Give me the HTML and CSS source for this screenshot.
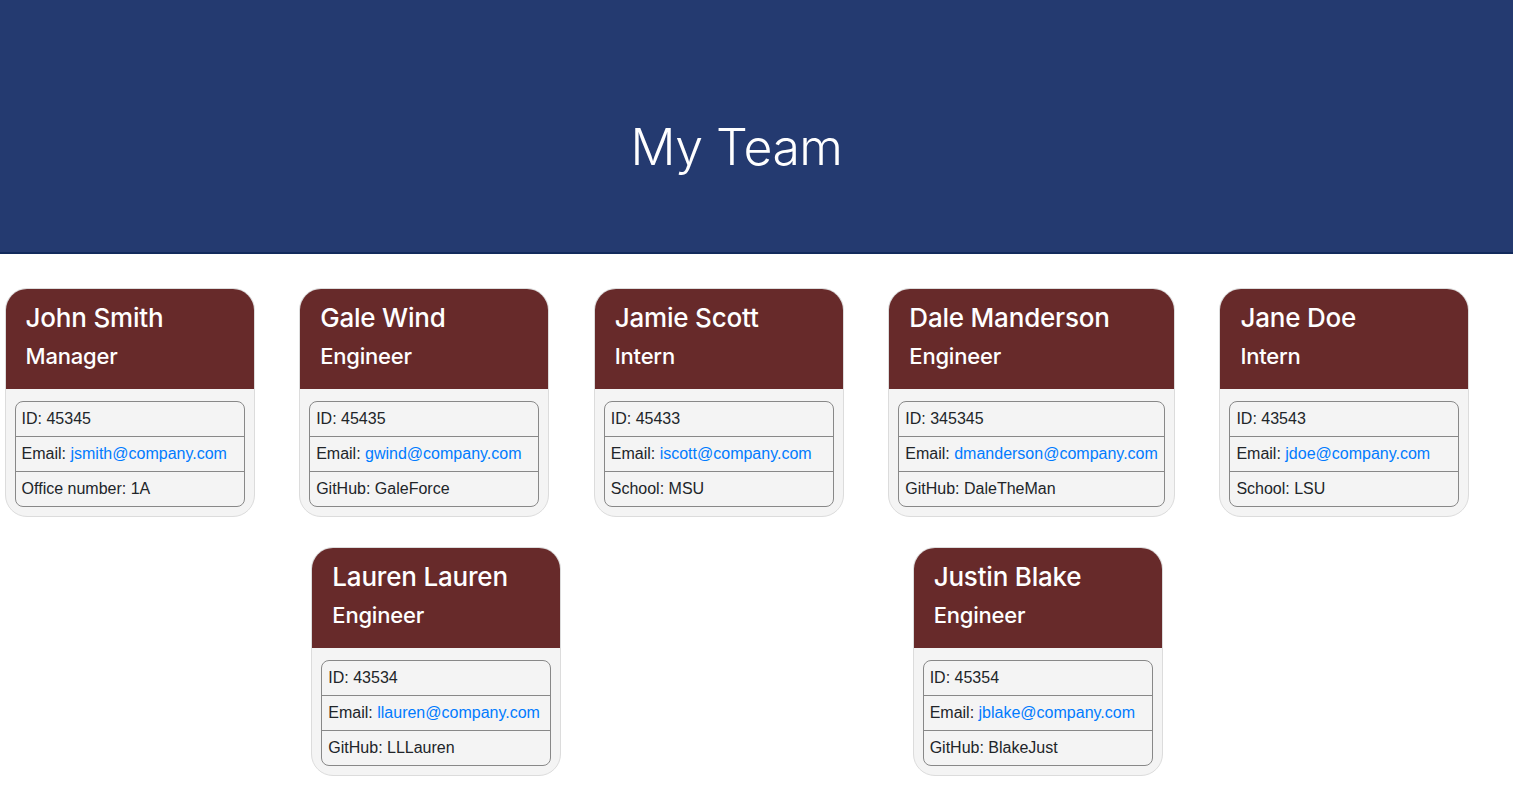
FILE: index.html
```html
<!DOCTYPE html>
<html lang="en">
<head>
<meta charset="utf-8">
<title>My Team</title>
<link rel="stylesheet" href="styles.css">
</head>
<body>
<header class="hero">
  <h1 class="hero-title">My Team</h1>
</header>
<main class="team">
  <div class="card">
    <div class="card-head"><h2 class="name">John Smith</h2><h3 class="role">Manager</h3></div>
    <div class="card-body"><ul class="info">
      <li>ID: 45345</li>
      <li>Email: <a href="#">jsmith@company.com</a></li>
      <li>Office number: 1A</li>
    </ul></div>
  </div>
  <div class="card">
    <div class="card-head"><h2 class="name">Gale Wind</h2><h3 class="role">Engineer</h3></div>
    <div class="card-body"><ul class="info">
      <li>ID: 45435</li>
      <li>Email: <a href="#">gwind@company.com</a></li>
      <li>GitHub: GaleForce</li>
    </ul></div>
  </div>
  <div class="card">
    <div class="card-head"><h2 class="name">Jamie Scott</h2><h3 class="role">Intern</h3></div>
    <div class="card-body"><ul class="info">
      <li>ID: 45433</li>
      <li>Email: <a href="#">iscott@company.com</a></li>
      <li>School: MSU</li>
    </ul></div>
  </div>
  <div class="card">
    <div class="card-head"><h2 class="name">Dale Manderson</h2><h3 class="role">Engineer</h3></div>
    <div class="card-body"><ul class="info">
      <li>ID: 345345</li>
      <li>Email: <a href="#">dmanderson@company.com</a></li>
      <li>GitHub: DaleTheMan</li>
    </ul></div>
  </div>
  <div class="card">
    <div class="card-head"><h2 class="name">Jane Doe</h2><h3 class="role">Intern</h3></div>
    <div class="card-body"><ul class="info">
      <li>ID: 43543</li>
      <li>Email: <a href="#">jdoe@company.com</a></li>
      <li>School: LSU</li>
    </ul></div>
  </div>
  <div class="card">
    <div class="card-head"><h2 class="name">Lauren Lauren</h2><h3 class="role">Engineer</h3></div>
    <div class="card-body"><ul class="info">
      <li>ID: 43534</li>
      <li>Email: <a href="#">llauren@company.com</a></li>
      <li>GitHub: LLLauren</li>
    </ul></div>
  </div>
  <div class="card">
    <div class="card-head"><h2 class="name">Justin Blake</h2><h3 class="role">Engineer</h3></div>
    <div class="card-body"><ul class="info">
      <li>ID: 45354</li>
      <li>Email: <a href="#">jblake@company.com</a></li>
      <li>GitHub: BlakeJust</li>
    </ul></div>
  </div>
</main>
</body>
</html>
```
FILE: styles.css
```css
html, body {
  margin: 0;
  padding: 0;
  background: #ffffff;
  font-family: "Liberation Sans", Arial, sans-serif;
  color: #212529;
}

.hero {
  height: 252px;
  background: #243a70;
  border-bottom: 2px solid #122a5c;
  display: flex;
  align-items: center;
  justify-content: center;
  padding-right: 40px;
}

.hero-title {
  margin: 0;
  padding-top: 42px;
  font-family: "Inter", "Liberation Sans", sans-serif;
  font-size: 50px;
  font-weight: 300;
  color: #ffffff;
  letter-spacing: -0.5px;
}

.team {
  display: flex;
  flex-wrap: wrap;
  justify-content: space-evenly;
  padding-top: 34px;
}

.card {
  box-sizing: border-box;
  min-width: 250px;
  margin: 0 40px 30px 1px;
  border: 1px solid #dcdcdc;
  border-radius: 22px;
  background: #f4f4f4;
  overflow: hidden;
  display: flex;
  flex-direction: column;
}

.card-head {
  background: #672a2a;
  color: #ffffff;
  padding: 12px 20px 10px;
  height: 100px;
  box-sizing: border-box;
}

.name {
  margin: 0;
  font-family: "Inter", "Liberation Sans", sans-serif;
  font-size: 26px;
  font-weight: 500;
  line-height: 34px;
  letter-spacing: -0.2px;
}

.role {
  margin: 6px 0 0;
  font-family: "Inter", "Liberation Sans", sans-serif;
  font-size: 22px;
  font-weight: 500;
  line-height: 30px;
  letter-spacing: -0.2px;
}

.card-body {
  padding: 12px 9px 9px;
}

.info {
  list-style: none;
  margin: 0;
  padding: 0;
  border: 1px solid #888888;
  border-radius: 8px;
  overflow: hidden;
}

.info li {
  height: 34px;
  line-height: 34px;
  padding: 0 6px;
  font-size: 16px;
  white-space: nowrap;
  border-top: 1px solid #888888;
}

.info li:first-child {
  border-top: none;
}

.info a {
  color: #007bff;
  text-decoration: none;
}
```
